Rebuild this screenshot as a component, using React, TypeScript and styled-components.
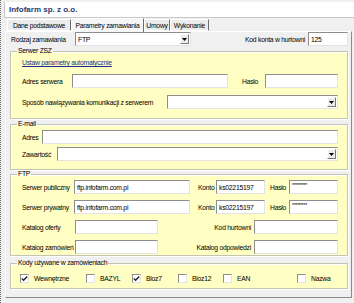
import React from 'react'
import styled, { createGlobalStyle } from 'styled-components'

const GlobalStyle = createGlobalStyle`
  html, body { margin: 0; padding: 0; background: #f0f0f0; }
  body { font-family: "Liberation Sans", Arial, sans-serif; }
  * { box-sizing: border-box; }
`

const Window = styled.div`
  width: 354px;
  height: 303px;
  background: #f0f0f0;
  border-left: 1px dotted #6a6a6a;
  padding: 2px 0 0 3px;
  font-size: 6.8px;
  letter-spacing: -0.25px;
  color: #000;
  overflow: hidden;
`

const TitleBar = styled.div`
  height: 16px;
  background: #fff;
  border-left: 1px solid #c8c8c8;
  border-bottom: 1px solid #c8c8c8;
  display: flex;
  align-items: center;
  padding-left: 4px;
  font-size: 8px;
  letter-spacing: 0;
  font-weight: bold;
  color: #1d3c74;
`

const TabBar = styled.div`
  display: flex;
  align-items: flex-end;
  height: 13px;
  padding-left: 3px;
`

const Tab = styled.div<{ $active?: boolean; $w: number }>`
  width: ${p => p.$w}px;
  height: ${p => (p.$active ? 14 : 12)}px;
  margin-bottom: ${p => (p.$active ? -1 : 0)}px;
  display: flex;
  align-items: center;
  justify-content: center;
  white-space: nowrap;
  background: ${p => (p.$active ? '#f6f6f6' : '#ececec')};
  border-top: 1px solid #fff;
  border-left: 1px solid #fff;
  border-bottom: ${p => (p.$active ? 'none' : '1px solid #fff')};
  border-right: 1px solid #6e6e6e;
  position: relative;
  z-index: ${p => (p.$active ? 1 : 0)};
`

const Panel = styled.div`
  width: 347px;
  height: 267px;
  margin-left: 1px;
  border-top: 1px solid #fff;
  border-left: 1px solid #fff;
  border-right: 1px solid #8a8a8a;
  border-bottom: 1px solid #8a8a8a;
  padding: 0 3px;
  display: flex;
  flex-direction: column;
`

const TopRow = styled.div`
  display: flex;
  align-items: center;
  height: 14px;
  padding-left: 2px;
`

const Label = styled.span<{ $w?: number; $right?: boolean }>`
  display: inline-block;
  width: ${p => (p.$w ? `${p.$w}px` : 'auto')};
  text-align: ${p => (p.$right ? 'right' : 'left')};
  white-space: nowrap;
  flex-shrink: 0;
`

const Field = styled.div<{ $w: number }>`
  width: ${p => p.$w}px;
  height: 14px;
  flex-shrink: 0;
  background: #fff;
  border: 1px solid;
  border-color: #8d8d8d #e4e4e4 #e4e4e4 #8d8d8d;
  display: flex;
  align-items: center;
  padding-left: 2px;
  overflow: hidden;
  white-space: nowrap;
`

const Stars = styled.span`
  font-size: 5px;
  align-self: flex-start;
  margin-top: 1px;
  letter-spacing: -0.3px;
`

const Arrow = styled.div`
  margin-left: auto;
  width: 9px;
  height: 10px;
  margin-right: 1px;
  border: 1px solid;
  border-color: #fff #7a7a7a #7a7a7a #fff;
  background: #ececec;
  display: flex;
  align-items: center;
  justify-content: center;
`

const Group = styled.fieldset<{ $h: number; $mt: number }>`
  margin: ${p => p.$mt}px 0 0 1px;
  width: 338px;
  height: ${p => p.$h}px;
  padding: 0 9px 0 11px;
  background: #ffffc4;
  border: 1px solid #c4c4b4;
  box-shadow: 1px 1px 0 #ffffff, inset 1px 1px 0 #ffffff;
  display: flex;
  flex-direction: column;
  min-inline-size: 0;
`

const Legend = styled.legend`
  padding: 0 1px;
  margin-left: -5px;
  font-size: 6.8px;
  line-height: 8px;
`

const Row = styled.div<{ $mt: number }>`
  display: flex;
  align-items: center;
  height: 14px;
  margin-top: ${p => p.$mt}px;
`

const Link = styled.a`
  color: #1c2e8c;
  text-decoration: underline;
  margin-top: 4px;
  line-height: 8px;
`

const Checks = styled.div`
  display: grid;
  grid-template-columns: 66px 46px 46px 45px 74px auto;
  margin-top: 6px;
  align-items: center;
  height: 10px;
`

const CheckItem = styled.label`
  display: flex;
  align-items: center;
  gap: 5px;
  margin-left: -2px;
`

const Box = styled.span`
  width: 9px;
  height: 9px;
  background: #fff;
  border: 1px solid;
  border-color: #8d8d8d #e4e4e4 #e4e4e4 #8d8d8d;
  display: flex;
  align-items: center;
  justify-content: center;
`

const Gap = styled.span<{ $w: number }>`
  display: inline-block;
  width: ${p => p.$w}px;
  flex-shrink: 0;
`

const Select: React.FC<{ w: number; value?: string }> = ({ w, value }) => (
  <Field $w={w}>
    {value}
    <Arrow>
      <svg width="5" height="3" viewBox="0 0 5 3">
        <path d="M0 0h5L2.5 3z" fill="#000" />
      </svg>
    </Arrow>
  </Field>
)

const Check: React.FC<{ label: string; checked?: boolean }> = ({ label, checked }) => (
  <CheckItem>
    <Box>
      {checked && (
        <svg width="7" height="7" viewBox="0 0 7 7">
          <path d="M0.8 3.4L2.6 5.2L6.2 1.4" stroke="#222" strokeWidth="1.4" fill="none" />
        </svg>
      )}
    </Box>
    {label}
  </CheckItem>
)

const FtpServer: React.FC<{ label: string }> = ({ label }) => (
  <>
    <Label $w={52}>{label}</Label>
    <Field $w={116}>ftp.infofarm.com.pl</Field>
    <Gap $w={8} />
    <Label $w={18}>Konto</Label>
    <Field $w={49}>ks02215197</Field>
    <Gap $w={5} />
    <Label $w={19}>Hasło</Label>
    <Field $w={49}><Stars>*********</Stars></Field>
  </>
)

export default function App() {
  return (
    <>
      <GlobalStyle />
      <Window>
        <TitleBar>Infofarm sp. z o.o.</TitleBar>
        <TabBar>
          <Tab $w={64}>Dane podstawowe</Tab>
          <Tab $w={73} $active>Parametry zamawiania</Tab>
          <Tab $w={26}>Umowy</Tab>
          <Tab $w={39}>Wykonanie</Tab>
        </TabBar>
        <Panel>
          <TopRow>
            <Label $w={64}>Rodzaj zamawiania</Label>
            <Select w={116} value="FTP" />
            <Label $w={114} $right>Kod konta w hurtowni</Label>
            <Gap $w={3} />
            <Field $w={40}>125</Field>
          </TopRow>

          <Group $h={72} $mt={1}>
            <Legend>Serwer ZSZ</Legend>
            <Link>Ustaw parametry automatycznie</Link>
            <Row $mt={7}>
              <Label $w={50}>Adres serwera</Label>
              <Field $w={156} />
              <Gap $w={14} />
              <Label $w={23}>Hasło</Label>
              <Field $w={73} />
            </Row>
            <Row $mt={7}>
              <Label $w={145}>Sposób nawiązywania komunikacji z serwerem</Label>
              <Select w={171} />
            </Row>
          </Group>

          <Group $h={50} $mt={1}>
            <Legend>E-mail</Legend>
            <Row $mt={2}>
              <Label $w={20}>Adres</Label>
              <Field $w={296} />
            </Row>
            <Row $mt={3}>
              <Label $w={35}>Zawartość</Label>
              <Select w={281} />
            </Row>
          </Group>

          <Group $h={86} $mt={0}>
            <Legend>FTP</Legend>
            <Row $mt={2}>
              <FtpServer label="Serwer publiczny" />
            </Row>
            <Row $mt={6}>
              <FtpServer label="Serwer prywatny" />
            </Row>
            <Row $mt={6}>
              <Label $w={53}>Katalog oferty</Label>
              <Field $w={83} />
              <Label $w={93} $right>Kod hurtowni</Label>
              <Gap $w={3} />
              <Field $w={84} />
            </Row>
            <Row $mt={6}>
              <Label $w={53}>Katalog zamówień</Label>
              <Field $w={83} />
              <Label $w={93} $right>Katalog odpowiedzi</Label>
              <Gap $w={3} />
              <Field $w={84} />
            </Row>
          </Group>

          <Group $h={30} $mt={3}>
            <Legend>Kody używane w zamówieniach</Legend>
            <Checks>
              <Check label="Wewnętrzne" checked />
              <Check label="BAZYL" />
              <Check label="Bloz7" checked />
              <Check label="Bloz12" />
              <Check label="EAN" />
              <Check label="Nazwa" />
            </Checks>
          </Group>
        </Panel>
      </Window>
    </>
  )
}
